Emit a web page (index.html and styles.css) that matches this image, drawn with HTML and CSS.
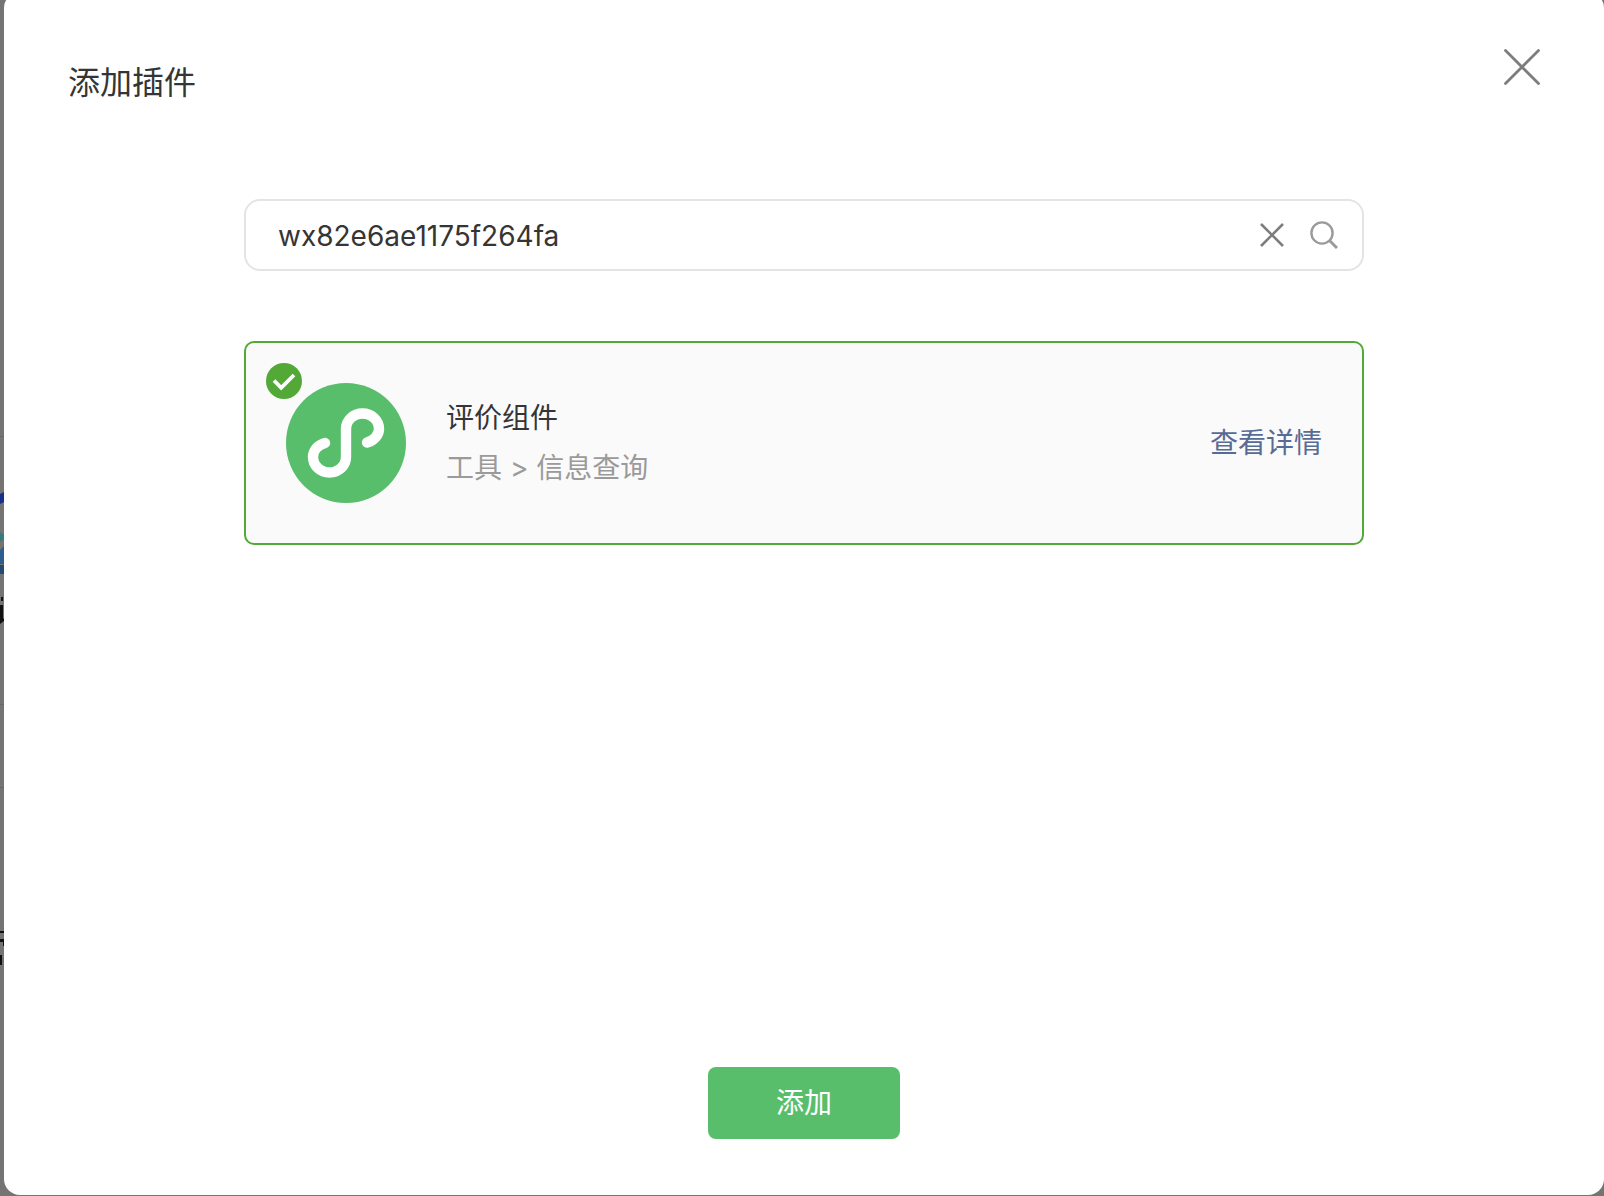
FILE: index.html
```
<!DOCTYPE html>
<html lang="zh-CN">
<head>
    <meta charset="UTF-8">
    <title>添加插件</title>
    <link rel="stylesheet" href="styles.css">
</head>
<body>
<!-- 遮罩下露出的页面边缘 -->
<svg class="backdrop" width="4" height="1196" viewBox="0 0 4 1196" aria-hidden="true">
    <path fill="#686868" d="M0 436h4v1H0zM0 704h4v1H0zM0 787h4v1H0z"/>
    <path fill="#16318c" d="M0 494l4-2v10l-4 2z"/>
    <path fill="#367b7e" d="M0 532l4 3v4l-4 3z"/>
    <path fill="#2c5f8e" d="M0 550l4-4v18H0z"/>
    <path fill="#234a73" d="M0 565h4v9H0z"/>
    <path fill="#111" d="M1 597h2v4H1zM0 605h3v14l1-1v3l-4 3zM0 931h4v2H0zM0 939h4v7H3v-4H0zM0 955h2v10H0z"/>
</svg>
<div class="dialog" role="dialog" aria-labelledby="dialogTitle">
    <div class="dialog-header">
        <h2 class="dialog-title" id="dialogTitle">添加插件</h2>
        <button class="icon-btn" type="button" aria-label="关闭">
            <svg width="36" height="36" viewBox="0 0 36 36">
                <path d="M1.5 1.5l33 33M34.5 1.5l-33 33" fill="none" stroke="#7c7d7f" stroke-width="2.8" stroke-linecap="round"/>
            </svg>
        </button>
    </div>

    <div class="dialog-body">
        <!-- 搜索框 -->
        <form class="search">
            <input class="search-input" type="text" name="appid" value="wx82e6ae1175f264fa" aria-label="插件AppID">
            <button class="icon-btn" type="button" aria-label="清空">
                <svg width="24" height="24" viewBox="0 0 24 24">
                    <path d="M1 1l22 22M23 1L1 23" fill="none" stroke="#7c7d7f" stroke-width="2.6"/>
                </svg>
            </button>
            <button class="icon-btn" type="submit" aria-label="搜索">
                <svg width="28" height="28" viewBox="0 0 28 28" fill="none" stroke="#9a9a9a">
                    <circle cx="12" cy="12" r="10.6" stroke-width="2.4"/>
                    <path d="M19.5 19.5l7.5 7.5" stroke-width="3"/>
                </svg>
            </button>
        </form>

        <!-- 搜索结果 -->
        <div class="plugin">
            <svg class="plugin-check" width="36" height="36" viewBox="0 0 36 36" role="img" aria-label="已选择">
                <circle cx="18" cy="18" r="18" fill="#52a936"/>
                <path d="M8 17.5l7.2 7.3L28 12" fill="none" stroke="#fff" stroke-width="3.8"/>
            </svg>
            <svg class="plugin-logo" width="120" height="120" viewBox="0 0 120 120" aria-hidden="true">
                <circle cx="60" cy="60" r="60" fill="#59be6b"/>
                <path d="M81 59.5C88 57.5 93 52 93 46A16.5 15.5 0 0 0 60 46V74A16.500 15.5 0 0 1 27 74C27 67 32 62 39 60" fill="none" stroke="#fff" stroke-width="10.4" stroke-linecap="round"/>
            </svg>
            <div class="plugin-info">
                <div class="plugin-name">评价组件</div>
                <div class="plugin-category">工具 &gt; 信息查询</div>
            </div>
            <a class="plugin-link" href="#">查看详情</a>
        </div>
    </div>

    <div class="dialog-footer">
        <button class="add-btn" type="button">添加</button>
    </div>
</div>
</body>
</html>
```
FILE: styles.css
```
* {
    box-sizing: border-box;
}

body {
    display: flex;
    min-height: 100vh;
    margin: 0;
    overflow: hidden;
    background: #757473;
    color: #353535;
    font-family: Inter, "Noto Sans CJK SC", sans-serif;
    font-size: 28px;
}

.backdrop {
    position: absolute;
    top: 0;
    left: 0;
}

/* 弹窗 */
.dialog {
    display: flex;
    flex: 1;
    flex-direction: column;
    margin: -8px 0 1px 4px;
    border-radius: 16px;
    background: #fff;
}

.dialog-header {
    display: flex;
    align-items: flex-start;
    justify-content: space-between;
    padding: 57px 64px 0;
}

.dialog-title {
    margin: 10px 0 0;
    font-size: 32px;
    font-weight: 400;
    line-height: 48px;
}

.dialog-body {
    flex: 1;
    padding: 92px 15% 0;
}

.dialog-footer {
    padding-bottom: 56px;
    text-align: center;
}

.icon-btn {
    display: block;
    padding: 0;
    border: 0;
    background: none;
    cursor: pointer;
}

.icon-btn svg {
    display: block;
}

/* 搜索框 */
.search {
    display: flex;
    align-items: center;
    gap: 26px;
    height: 72px;
    padding: 0 24px 0 32px;
    border: 2px solid #e4e4e4;
    border-radius: 16px;
}

.search-input {
    flex: 1;
    min-width: 0;
    padding: 2px 0 0;
    border: 0;
    outline: none;
    background: none;
    color: inherit;
    font: inherit;
    line-height: 40px;
}

/* 插件卡片 */
.plugin {
    position: relative;
    display: flex;
    align-items: center;
    gap: 40px;
    margin-top: 70px;
    padding: 40px;
    border: 2px solid #52a936;
    border-radius: 10px;
    background: #fafafa;
    line-height: 50px;
}

.plugin-check {
    position: absolute;
    top: 20px;
    left: 20px;
}

.plugin-info {
    flex: 1;
}

.plugin-category {
    color: #9a9a9a;
}

.plugin-link {
    color: #576b95;
    text-decoration: none;
}

.add-btn {
    width: 192px;
    height: 72px;
    padding: 0;
    border: 0;
    border-radius: 8px;
    background: #59be6b;
    color: #fff;
    font: inherit;
    line-height: 72px;
    cursor: pointer;
}
```
